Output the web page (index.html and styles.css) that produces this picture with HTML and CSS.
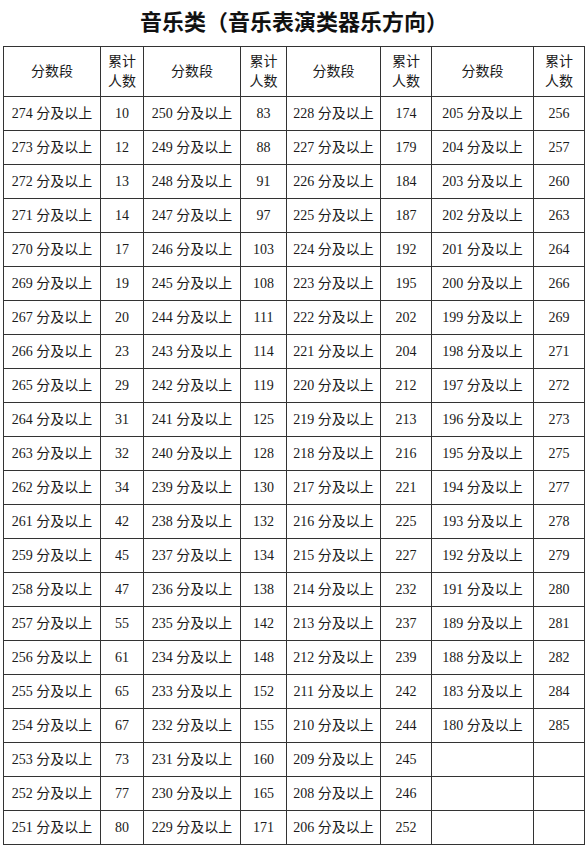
FILE: index.html
```html
<!DOCTYPE html>
<html lang="zh">
<head>
<meta charset="utf-8">
<link rel="stylesheet" href="styles.css">
</head>
<body>
<h1 class="title">音乐类（音乐表演类器乐方向）</h1>
<table class="score">
<colgroup>
<col class="c1"><col class="c2"><col class="c3"><col class="c4"><col class="c5"><col class="c6"><col class="c7"><col class="c8">
</colgroup>
<thead>
<tr><th>分数段</th><th>累计<br>人数</th><th>分数段</th><th>累计<br>人数</th><th>分数段</th><th>累计<br>人数</th><th>分数段</th><th>累计<br>人数</th></tr>
</thead>
<tbody>
<tr><td>274 分及以上</td><td>10</td><td>250 分及以上</td><td>83</td><td>228 分及以上</td><td>174</td><td>205 分及以上</td><td>256</td></tr>
<tr><td>273 分及以上</td><td>12</td><td>249 分及以上</td><td>88</td><td>227 分及以上</td><td>179</td><td>204 分及以上</td><td>257</td></tr>
<tr><td>272 分及以上</td><td>13</td><td>248 分及以上</td><td>91</td><td>226 分及以上</td><td>184</td><td>203 分及以上</td><td>260</td></tr>
<tr><td>271 分及以上</td><td>14</td><td>247 分及以上</td><td>97</td><td>225 分及以上</td><td>187</td><td>202 分及以上</td><td>263</td></tr>
<tr><td>270 分及以上</td><td>17</td><td>246 分及以上</td><td>103</td><td>224 分及以上</td><td>192</td><td>201 分及以上</td><td>264</td></tr>
<tr><td>269 分及以上</td><td>19</td><td>245 分及以上</td><td>108</td><td>223 分及以上</td><td>195</td><td>200 分及以上</td><td>266</td></tr>
<tr><td>267 分及以上</td><td>20</td><td>244 分及以上</td><td>111</td><td>222 分及以上</td><td>202</td><td>199 分及以上</td><td>269</td></tr>
<tr><td>266 分及以上</td><td>23</td><td>243 分及以上</td><td>114</td><td>221 分及以上</td><td>204</td><td>198 分及以上</td><td>271</td></tr>
<tr><td>265 分及以上</td><td>29</td><td>242 分及以上</td><td>119</td><td>220 分及以上</td><td>212</td><td>197 分及以上</td><td>272</td></tr>
<tr><td>264 分及以上</td><td>31</td><td>241 分及以上</td><td>125</td><td>219 分及以上</td><td>213</td><td>196 分及以上</td><td>273</td></tr>
<tr><td>263 分及以上</td><td>32</td><td>240 分及以上</td><td>128</td><td>218 分及以上</td><td>216</td><td>195 分及以上</td><td>275</td></tr>
<tr><td>262 分及以上</td><td>34</td><td>239 分及以上</td><td>130</td><td>217 分及以上</td><td>221</td><td>194 分及以上</td><td>277</td></tr>
<tr><td>261 分及以上</td><td>42</td><td>238 分及以上</td><td>132</td><td>216 分及以上</td><td>225</td><td>193 分及以上</td><td>278</td></tr>
<tr><td>259 分及以上</td><td>45</td><td>237 分及以上</td><td>134</td><td>215 分及以上</td><td>227</td><td>192 分及以上</td><td>279</td></tr>
<tr><td>258 分及以上</td><td>47</td><td>236 分及以上</td><td>138</td><td>214 分及以上</td><td>232</td><td>191 分及以上</td><td>280</td></tr>
<tr><td>257 分及以上</td><td>55</td><td>235 分及以上</td><td>142</td><td>213 分及以上</td><td>237</td><td>189 分及以上</td><td>281</td></tr>
<tr><td>256 分及以上</td><td>61</td><td>234 分及以上</td><td>148</td><td>212 分及以上</td><td>239</td><td>188 分及以上</td><td>282</td></tr>
<tr><td>255 分及以上</td><td>65</td><td>233 分及以上</td><td>152</td><td>211 分及以上</td><td>242</td><td>183 分及以上</td><td>284</td></tr>
<tr><td>254 分及以上</td><td>67</td><td>232 分及以上</td><td>155</td><td>210 分及以上</td><td>244</td><td>180 分及以上</td><td>285</td></tr>
<tr><td>253 分及以上</td><td>73</td><td>231 分及以上</td><td>160</td><td>209 分及以上</td><td>245</td><td></td><td></td></tr>
<tr><td>252 分及以上</td><td>77</td><td>230 分及以上</td><td>165</td><td>208 分及以上</td><td>246</td><td></td><td></td></tr>
<tr><td>251 分及以上</td><td>80</td><td>229 分及以上</td><td>171</td><td>206 分及以上</td><td>252</td><td></td><td></td></tr>
</tbody>
</table>
</body>
</html>
```
FILE: styles.css
```css
html, body {
  margin: 0;
  padding: 0;
  background: #ffffff;
}
body {
  font-family: "Liberation Serif", "Noto Sans CJK SC", serif;
  color: #1a1a1a;
}
.title {
  margin: 0;
  height: 46px;
  line-height: 46px;
  text-align: center;
  font-size: 22px;
  font-weight: bold;
  font-family: "Liberation Serif", "Noto Sans CJK SC", serif;
  color: #111;
  letter-spacing: 0;
}
.score {
  margin-left: 3px;
  width: 581px;
  border-collapse: collapse;
  table-layout: fixed;
  font-size: 14px;
}
.c1 { width: 97px; }
.c2 { width: 43px; }
.c3 { width: 97px; }
.c4 { width: 46px; }
.c5 { width: 94px; }
.c6 { width: 51px; }
.c7 { width: 102px; }
.c8 { width: 51px; }
.score th,
.score td {
  border: 1px solid #333;
  padding: 0;
  text-align: center;
  vertical-align: middle;
  white-space: nowrap;
  overflow: hidden;
}
.score th {
  height: 49px;
  font-weight: normal;
  line-height: 20px;
}
.score td {
  height: 33px;
  line-height: 20px;
}
```
